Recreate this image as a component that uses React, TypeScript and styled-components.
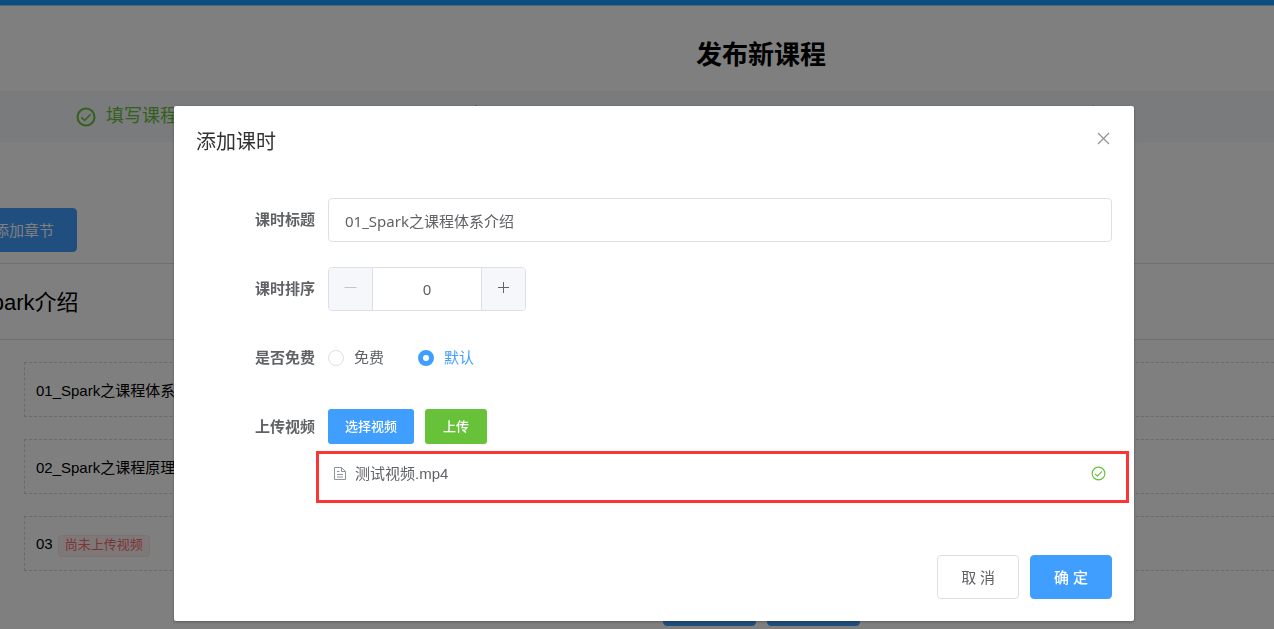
import React, { useState } from 'react';
import styled, { createGlobalStyle, css } from 'styled-components';

const GlobalStyle = createGlobalStyle`
  *, *::before, *::after { box-sizing: border-box; }
  body {
    margin: 0;
    overflow: hidden;
    background: #fff;
    color: #000;
    font-family: "Liberation Sans", "Noto Sans CJK SC", sans-serif;
  }
  button, input { font: inherit; }
`;

const Page = styled.div`
  min-height: 100vh;
  overflow: hidden;
`;

const TopBar = styled.div`
  height: 6px;
  background: #189fff;
  border-bottom: 1px solid #a0cfff;
`;

const PageTitle = styled.h1`
  margin: 0;
  padding: 31px 0 18px 248px;
  font-size: 26px;
  line-height: 36px;
  text-align: center;
  font-weight: 700;
`;

const Steps = styled.ol`
  display: grid;
  grid-template-columns: 340fr 515fr 145fr;
  align-items: center;
  height: 51px;
  margin: 0;
  padding: 0 0 0 76px;
  list-style: none;
  background: #f5f7fa;
`;

const Step = styled.li`
  display: flex;
  align-items: center;
  gap: 10px;
  color: #67c23a;
  font-size: 18px;
  line-height: 24px;
  white-space: nowrap;
`;

const StepName = styled.span`
  padding-bottom: 2px;
`;

const StepArrow = styled.svg`
  margin-left: auto;
`;

const PrimaryButton = styled.button`
  height: 44px;
  border: 1px solid #409eff;
  border-radius: 4px;
  padding: 0 22px 2px;
  background: #409eff;
  color: #fff;
  font-size: 15px;
  white-space: nowrap;
`;

const Actions = styled.div`
  margin: 66px 0 11px -29px;
`;

const ChapterTitle = styled.h2`
  display: flex;
  align-items: center;
  height: 77px;
  margin: 0;
  padding-bottom: 4px;
  border-top: 1px solid #dcdfe6;
  border-bottom: 1px solid #dcdfe6;
  font-size: 22px;
  font-weight: 400;
`;

const ChapterName = styled.span`
  margin-left: -23px;
`;

const Lessons = styled.ul`
  display: grid;
  gap: 22px;
  margin: 22px -20px 0 24px;
  padding: 0;
  list-style: none;
`;

const Lesson = styled.li`
  display: flex;
  align-items: center;
  gap: 5px;
  height: 55px;
  padding: 0 11px;
  border: 1px dashed #d4d4d4;
  font-size: 15px;
`;

const Tag = styled.span`
  height: 22px;
  margin-top: 4px;
  padding: 0 6px;
  border: 1px solid #fde2e2;
  border-radius: 4px;
  background: #fef0f0;
  color: #f56c6c;
  font-size: 13px;
  line-height: 18px;
`;

const PageFooter = styled.div`
  display: flex;
  justify-content: center;
  gap: 11px;
  padding: 11px 0 3px 248px;
`;

const FooterButton = styled(PrimaryButton)`
  width: 93px;
`;

const Overlay = styled.div`
  position: fixed;
  inset: 0;
  padding: 106px 140px 0 174px;
  background: rgba(0, 0, 0, 0.5);
`;

const Dialog = styled.section`
  display: flex;
  flex-direction: column;
  padding: 22px;
  border-radius: 2px;
  background: #fff;
  box-shadow: 0 1px 3px rgba(0, 0, 0, 0.3);
  color: #606266;
  font-family: "Noto Sans", "Noto Sans CJK SC", sans-serif;
  font-size: 15px;
`;

const DialogHeader = styled.header`
  display: flex;
  align-items: center;
  justify-content: space-between;
  height: 26px;
  margin-bottom: 44px;
`;

const DialogTitle = styled.h2`
  margin: 2px 0 0;
  color: #303133;
  font-size: 20px;
  font-weight: 400;
  line-height: 26px;
`;

const CloseButton = styled.button`
  display: flex;
  padding: 2px;
  margin-bottom: 6px;
  border: 0;
  background: none;
  color: #909399;
`;

const FormRow = styled.div`
  display: grid;
  grid-template-columns: 119px 1fr;
  column-gap: 13px;
  margin-bottom: 25px;
  line-height: 42px;
`;

const labelStyle = css`
  color: #606266;
  font-weight: 700;
  text-align: right;
`;

const Label = styled.label`
  ${labelStyle}
`;

const GroupLabel = styled.span`
  ${labelStyle}
`;

const TextInput = styled.input`
  width: 100%;
  height: 44px;
  padding: 0 16px;
  border: 1px solid #dcdfe6;
  border-radius: 4px;
  background: #fff;
  color: #606266;
`;

const NumberBox = styled.div`
  display: flex;
  width: 198px;
  height: 44px;
  border: 1px solid #dcdfe6;
  border-radius: 4px;
  overflow: hidden;
`;

const NumberButton = styled.button`
  display: flex;
  align-items: center;
  justify-content: center;
  width: 43px;
  padding: 0 0 3px;
  border: 0;
  background: #f5f7fa;
  color: #606266;
  &:disabled { color: #c0c4cc; }
`;

const NumberInput = styled.input`
  flex: 1;
  min-width: 0;
  padding: 0;
  border: solid #dcdfe6;
  border-width: 0 1px;
  color: #606266;
  text-align: center;
`;

const Radios = styled.div`
  display: flex;
  gap: 34px;
  height: 44px;
`;

const RadioLabel = styled.label<{ $checked: boolean }>`
  display: flex;
  align-items: center;
  gap: 10px;
  color: ${(p) => (p.$checked ? '#409eff' : '#606266')};
`;

const RadioText = styled.span`
  padding-bottom: 2px;
`;

const RadioInput = styled.input`
  appearance: none;
  width: 16px;
  height: 16px;
  margin: 0;
  border: 1px solid #dcdfe6;
  border-radius: 50%;
  background: #fff;
  &:checked { border: 5px solid #409eff; }
`;

const UploadButtons = styled.div`
  display: flex;
  align-items: center;
  gap: 11px;
  height: 42px;
`;

const SmallButton = styled.button<{ $color: string }>`
  height: 35px;
  padding: 0 17px;
  border: 0;
  border-radius: 3px;
  background: ${(p) => p.$color};
  color: #fff;
  font-size: 13px;
  font-weight: 500;
  line-height: 35px;
  min-width: 62px;
`;

const FileBox = styled.div`
  display: flex;
  align-items: flex-start;
  height: 52px;
  margin: 4px -17px 0 -12px;
  padding: 8px 20px 0 14px;
  border: 3px solid #fa3534;
  font-family: "Liberation Sans", "Noto Sans CJK SC", sans-serif;
  line-height: 24px;
`;

const FileName = styled.span`
  flex: 1;
  margin-left: 8px;
`;

const FileIcon = styled.span`
  display: flex;
  margin-top: 4px;
`;

const DialogFooter = styled.footer`
  display: flex;
  justify-content: flex-end;
  gap: 11px;
  margin-top: 27px;
`;

const ConfirmButton = styled(PrimaryButton)`
  padding: 0 23px 1px;
  font-weight: 500;
`;

const CancelButton = styled(ConfirmButton)`
  border-color: #dcdfe6;
  background: #fff;
  color: #606266;
  font-weight: 400;
`;

function CheckCircle({ size, weight, color }: { size: number; weight: number; color: string }) {
  return (
    <svg width={size} height={size} viewBox="0 0 20 20" fill="none" stroke={color} aria-hidden="true">
      <circle cx="10" cy="10" r="8.5" strokeWidth={weight} />
      <path d="M5.4 10.4l3.2 3.1 6-6.3" strokeWidth="1.5" />
    </svg>
  );
}

function Chevron() {
  return (
    <StepArrow width="8" height="25" viewBox="0 0 8 25" fill="none" stroke="#909399" aria-hidden="true">
      <path d="M1 1l6 11.500L1 24" />
    </StepArrow>
  );
}

export default function App() {
  const [title, setTitle] = useState('01_Spark之课程体系介绍');
  const [order, setOrder] = useState(0);
  const [free, setFree] = useState(false);

  return (
    <>
      <GlobalStyle />
      <Page>
        <TopBar />
        <PageTitle>发布新课程</PageTitle>
        <Steps>
          <Step>
            <CheckCircle size={20} weight={2} color="#67c23a" />
            <StepName>填写课程</StepName>
            <Chevron />
          </Step>
          <Step>
            <Chevron />
          </Step>
          <Step />
        </Steps>
        <Actions>
          <PrimaryButton type="button">添加章节</PrimaryButton>
        </Actions>
        <ChapterTitle>
          <ChapterName>Spark介绍</ChapterName>
        </ChapterTitle>
        <Lessons>
          <Lesson>01_Spark之课程体系</Lesson>
          <Lesson>02_Spark之课程原理</Lesson>
          <Lesson>
            03 <Tag>尚未上传视频</Tag>
          </Lesson>
        </Lessons>
        <PageFooter>
          <FooterButton type="button" aria-label="上一步" />
          <FooterButton type="button" aria-label="下一步" />
        </PageFooter>
      </Page>

      <Overlay>
        <Dialog role="dialog" aria-modal="true" aria-labelledby="dialog-title">
          <DialogHeader>
            <DialogTitle id="dialog-title">添加课时</DialogTitle>
            <CloseButton type="button" aria-label="关闭">
              <svg width="13" height="13" viewBox="0 0 13 13" stroke="currentColor" strokeWidth="1.2">
                <path d="M1 1l11 11M12 1L1 12" />
              </svg>
            </CloseButton>
          </DialogHeader>

          <FormRow>
            <Label htmlFor="title">课时标题</Label>
            <TextInput id="title" value={title} onChange={(e) => setTitle(e.target.value)} />
          </FormRow>

          <FormRow>
            <Label htmlFor="order">课时排序</Label>
            <NumberBox>
              <NumberButton type="button" aria-label="减少" disabled={order <= 0} onClick={() => setOrder(order - 1)}>
                <svg width="13" height="13" viewBox="0 0 13 13" stroke="currentColor">
                  <path d="M0.500 6.500h12" />
                </svg>
              </NumberButton>
              <NumberInput
                id="order"
                inputMode="numeric"
                value={order}
                onChange={(e) => setOrder(Number(e.target.value) || 0)}
              />
              <NumberButton type="button" aria-label="增加" onClick={() => setOrder(order + 1)}>
                <svg width="13" height="13" viewBox="0 0 13 13" stroke="currentColor">
                  <path d="M1 6.500h11M6.500 1v11" />
                </svg>
              </NumberButton>
            </NumberBox>
          </FormRow>

          <FormRow role="radiogroup" aria-labelledby="free-label">
            <GroupLabel id="free-label">是否免费</GroupLabel>
            <Radios>
              <RadioLabel $checked={free}>
                <RadioInput type="radio" name="free" checked={free} onChange={() => setFree(true)} />
                <RadioText>免费</RadioText>
              </RadioLabel>
              <RadioLabel $checked={!free}>
                <RadioInput type="radio" name="free" checked={!free} onChange={() => setFree(false)} />
                <RadioText>默认</RadioText>
              </RadioLabel>
            </Radios>
          </FormRow>

          <FormRow>
            <GroupLabel>上传视频</GroupLabel>
            <div>
              <UploadButtons>
                <SmallButton type="button" $color="#409eff">选择视频</SmallButton>
                <SmallButton type="button" $color="#67c23a">上传</SmallButton>
              </UploadButtons>
              <FileBox>
                <FileIcon>
                  <svg width="14" height="15" viewBox="0 0 14 15" fill="none" stroke="#909399" aria-hidden="true">
                    <path d="M1.500 1.500h7l4 4v8h-11zM8.500 1.500v4h4M4 5.500h2.500M4 8.500h6M4 11h6" />
                  </svg>
                </FileIcon>
                <FileName>测试视频.mp4</FileName>
                <FileIcon>
                  <CheckCircle size={15} weight={1.5} color="#67c23a" />
                </FileIcon>
              </FileBox>
            </div>
          </FormRow>

          <DialogFooter>
            <CancelButton type="button">取 消</CancelButton>
            <ConfirmButton type="button">确 定</ConfirmButton>
          </DialogFooter>
        </Dialog>
      </Overlay>
    </>
  );
}
